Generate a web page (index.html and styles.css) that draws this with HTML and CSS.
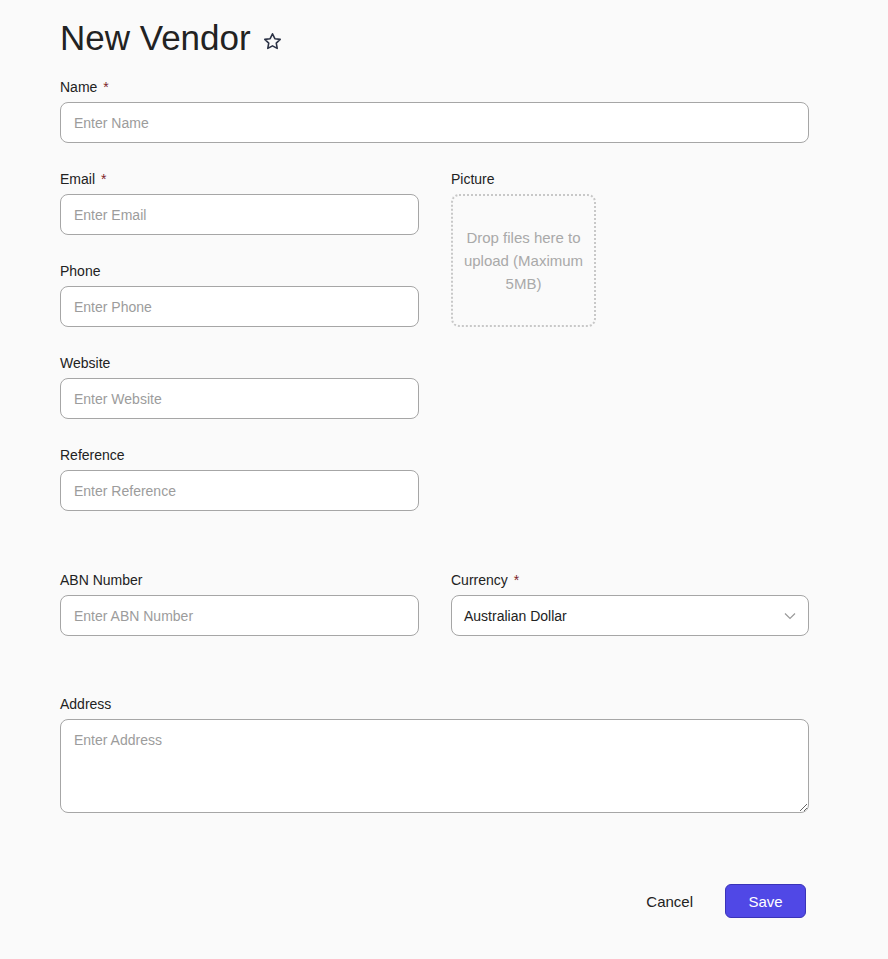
FILE: index.html
```html
<!DOCTYPE html>
<html lang="en">
<head>
    <meta charset="UTF-8">
    <meta name="viewport" content="width=device-width, initial-scale=1.0">
    <title>New Vendor</title>
    <link rel="stylesheet" href="styles.css">
</head>
<body>
    <form class="vendor-form">
        <h1 class="title">
            New Vendor
            <svg class="star" width="21" height="21" viewBox="0 0 24 24">
                <path d="M12 3.2l2.7 5.6 6.1.8-4.5 4.2 1.1 6.1L12 17l-5.4 2.9 1.1-6.1-4.5-4.2 6.1-.8z" fill="none" stroke="#2b3245" stroke-width="1.8" stroke-linejoin="round"/>
            </svg>
        </h1>

        <div class="field">
            <label class="label">Name<span class="required">*</span></label>
            <input type="text" class="input" placeholder="Enter Name">
        </div>

        <div class="columns">
            <div class="column">
                <div class="field">
                    <label class="label">Email<span class="required">*</span></label>
                    <input type="text" class="input" placeholder="Enter Email">
                </div>
                <div class="field">
                    <label class="label">Phone</label>
                    <input type="text" class="input" placeholder="Enter Phone">
                </div>
                <div class="field">
                    <label class="label">Website</label>
                    <input type="text" class="input" placeholder="Enter Website">
                </div>
                <div class="field">
                    <label class="label">Reference</label>
                    <input type="text" class="input" placeholder="Enter Reference">
                </div>
            </div>
            <div class="column">
                <div class="field">
                    <label class="label">Picture</label>
                    <div class="dropzone">Drop files here to upload (Maximum 5MB)</div>
                </div>
            </div>
        </div>

        <div class="columns section">
            <div class="field">
                <label class="label">ABN Number</label>
                <input type="text" class="input" placeholder="Enter ABN Number">
            </div>
            <div class="field">
                <label class="label">Currency<span class="required">*</span></label>
                <div class="select">
                    <span>Australian Dollar</span>
                    <svg width="12" height="8" viewBox="0 0 12 8">
                        <path d="M1 1.5l5 5 5-5" fill="none" stroke="#9a9a9a" stroke-width="1.2"/>
                    </svg>
                </div>
            </div>
        </div>

        <div class="field section">
            <label class="label">Address</label>
            <textarea class="input textarea" placeholder="Enter Address"></textarea>
        </div>

        <div class="actions">
            <button type="button" class="button cancel">Cancel</button>
            <button type="button" class="button save">Save</button>
        </div>
    </form>
</body>
</html>
```

FILE: styles.css
```css
body {
    margin: 0;
    background: #fafafa;
    font-family: "Liberation Sans", Arial, sans-serif;
    color: #222;
}
.vendor-form {
    width: 749px;
    padding: 18px 0 30px 60px;
}
.title {
    margin: 0 0 19px;
    font-size: 35px;
    line-height: 40px;
    font-weight: normal;
    color: #222;
    display: flex;
    align-items: center;
}
.star {
    margin-left: 11px;
    margin-top: 6px;
}
.field {
    display: flex;
    flex-direction: column;
    margin-bottom: 26px;
}
.label {
    font-size: 14px;
    line-height: 20px;
    margin-bottom: 5px;
    color: #222;
}
.required {
    color: #7d1f2b;
    margin-left: 6px;
}
.input {
    height: 41px;
    box-sizing: border-box;
    border: 1px solid #a6a6a6;
    border-radius: 8px;
    background: #fff;
    padding: 0 13px;
    font-family: inherit;
    font-size: 14px;
    color: #222;
    outline: none;
}
.input::placeholder {
    color: #9c9c9c;
}
.columns {
    display: grid;
    grid-template-columns: 359px 358px;
    gap: 32px;
}
.section {
    margin-top: 33px;
}
.columns.section .field {
    margin-bottom: 0;
}
.columns.section {
    margin-bottom: 58px;
}
.dropzone {
    width: 145px;
    height: 133px;
    box-sizing: border-box;
    border: 2px dotted #c8c8c8;
    border-radius: 8px;
    padding: 0 8px;
    display: flex;
    align-items: center;
    justify-content: center;
    text-align: center;
    font-size: 15px;
    line-height: 23px;
    color: #a9a9a9;
}
.select {
    height: 41px;
    box-sizing: border-box;
    border: 1px solid #a6a6a6;
    border-radius: 8px;
    background: #fff;
    padding: 0 12px;
    display: flex;
    align-items: center;
    justify-content: space-between;
    font-size: 14px;
    color: #222;
}
.textarea {
    height: 94px;
    padding-top: 12px;
    resize: vertical;
    line-height: 16px;
}
.actions {
    display: flex;
    justify-content: flex-end;
    align-items: center;
    margin-top: 71px;
    padding-right: 3px;
}
.button {
    font-family: inherit;
    font-size: 15px;
    height: 34px;
    cursor: pointer;
}
.cancel {
    background: none;
    border: none;
    color: #222;
    padding: 0 16px;
    margin-right: 16px;
}
.save {
    width: 81px;
    background: #5048e6;
    border: 1px solid #3a33b8;
    border-radius: 6px;
    color: #fff;
}
```
